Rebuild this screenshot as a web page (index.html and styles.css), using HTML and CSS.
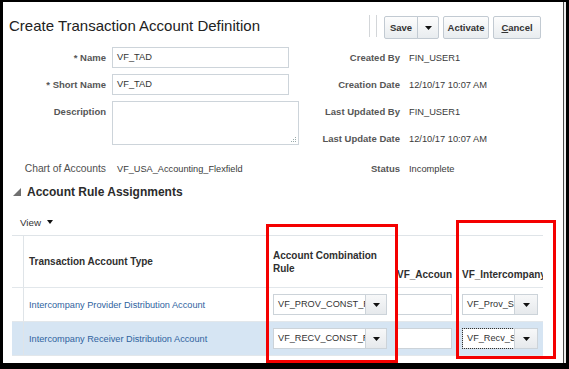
FILE: index.html
```html
<!DOCTYPE html>
<html>
<head>
<meta charset="utf-8">
<link rel="stylesheet" href="styles.css">
</head>
<body>
<div class="frame">
  <div class="page">
    <div class="header">
      <h1 class="title">Create Transaction Account Definition</h1>
      <div class="toolbar">
        <span class="sep"></span><span class="sep sep2"></span>
        <div class="split">
          <button class="btn save">Save</button>
          <button class="btn arrow"><svg width="7" height="4" viewBox="0 0 7 4"><path d="M0 0H7L3.5 4Z" fill="#111"/></svg></button>
        </div>
        <button class="btn activate">Activate</button>
        <button class="btn cancel"><u>C</u>ancel</button>
      </div>
    </div>

    <div class="form">
      <div class="lbl">* Name</div>
      <div><div class="input">VF_TAD</div></div>
      <div class="lbl2">Created By</div>
      <div class="val">FIN_USER1</div>

      <div class="lbl">* Short Name</div>
      <div><div class="input">VF_TAD</div></div>
      <div class="lbl2">Creation Date</div>
      <div class="val">12/10/17 10:07 AM</div>

      <div class="lbl">Description</div>
      <div class="desc"><svg width="5" height="5" viewBox="0 0 5 5"><rect x="4" y="0" width="1" height="1" fill="#9aa"/><rect x="2" y="2" width="1" height="1" fill="#9aa"/><rect x="4" y="2" width="1" height="1" fill="#9aa"/><rect x="0" y="4" width="1" height="1" fill="#9aa"/><rect x="2" y="4" width="1" height="1" fill="#9aa"/><rect x="4" y="4" width="1" height="1" fill="#9aa"/></svg></div>
      <div class="lbl2">Last Updated By</div>
      <div class="val">FIN_USER1</div>

      <div></div>
      <div class="lbl2">Last Update Date</div>
      <div class="val">12/10/17 10:07 AM</div>

      <div class="lbl plain r5">Chart of Accounts</div>
      <div class="val2 r5">VF_USA_Accounting_Flexfield</div>
      <div class="lbl2 r5">Status</div>
      <div class="val r5">Incomplete</div>
    </div>

    <div class="section">
      <svg width="8" height="8" viewBox="0 0 8 8"><path d="M8 0V8H0Z" fill="#707070"/></svg>
      <span class="section-title">Account Rule Assignments</span>
    </div>

    <div class="viewmenu">View <svg width="6" height="4" viewBox="0 0 6 4"><path d="M0 0H6L3 4Z" fill="#111"/></svg></div>

    <div class="table">
      <div class="trow thead">
        <div class="rh"></div>
        <div class="c c1 mid">Transaction Account Type</div>
        <div class="c mid wrap">Account Combination Rule</div>
        <div class="c bot">VF_Accoun</div>
        <div class="c bot">VF_Intercompany</div>
      </div>
      <div class="trow">
        <div class="rh"></div>
        <div class="c c1 link">Intercompany Provider Distribution Account</div>
        <div class="c"><div class="combo w2"><div class="txt">VF_PROV_CONST_RULE</div><div class="dd"><svg width="7" height="4" viewBox="0 0 7 4"><path d="M0 0H7L3.5 4Z" fill="#111"/></svg></div></div></div>
        <div class="c"><div class="plainin"></div></div>
        <div class="c"><div class="combo w4"><div class="txt">VF_Prov_Segment</div><div class="dd"><svg width="7" height="4" viewBox="0 0 7 4"><path d="M0 0H7L3.5 4Z" fill="#111"/></svg></div></div></div>
      </div>
      <div class="trow sel">
        <div class="rh"></div>
        <div class="c c1 link">Intercompany Receiver Distribution Account</div>
        <div class="c"><div class="combo w2"><div class="txt">VF_RECV_CONST_RULE</div><div class="dd"><svg width="7" height="4" viewBox="0 0 7 4"><path d="M0 0H7L3.5 4Z" fill="#111"/></svg></div></div></div>
        <div class="c"><div class="plainin"></div></div>
        <div class="c"><div class="combo w4"><div class="txt focus">VF_Recv_Segment</div><div class="dd"><svg width="7" height="4" viewBox="0 0 7 4"><path d="M0 0H7L3.5 4Z" fill="#111"/></svg></div></div></div>
      </div>
    </div>
  </div>
  <div class="mark mark1"></div>
  <div class="mark mark2"></div>
</div>
</body>
</html>
```

FILE: styles.css
```css
html, body {
  margin: 0;
  padding: 0;
  background: #000;
}
body {
  font-family: "Liberation Sans", Arial, sans-serif;
  color: #333;
}
.frame {
  position: relative;
  width: 569px;
  height: 369px;
  box-sizing: border-box;
  background: #000;
  padding: 2px 3px 6px 3px;
}
.page {
  height: 100%;
  box-sizing: border-box;
  background: #fff;
  box-shadow: inset -2px 0 0 #ececec, inset -3px 0 0 #4a4a4a;
  padding-left: 6px;
  overflow: hidden;
}

/* header */
.header {
  display: flex;
  justify-content: space-between;
  align-items: flex-start;
  padding-top: 14px;
  padding-right: 25px;
  height: 23px;
}
.title {
  margin: 1px 0 0 0;
  font-size: 15px;
  line-height: 18px;
  font-weight: normal;
  color: #222;
}
.toolbar {
  display: flex;
  align-items: flex-start;
}
.sep {
  width: 1px;
  height: 22px;
  margin-top: -1px;
  background: #d3d6d9;
}
.sep2 { margin-left: 6px; margin-right: 7px; }
.split { display: flex; }
.btn {
  height: 23px;
  box-sizing: border-box;
  border: 1px solid #c2cad2;
  border-radius: 2px;
  background: linear-gradient(#fdfdfd, #e8ecef);
  font-family: "Liberation Sans", Arial, sans-serif;
  font-size: 9.5px;
  font-weight: bold;
  color: #333;
  padding: 0;
  display: flex;
  align-items: center;
  justify-content: center;
}
.save { width: 34px; border-radius: 2px 0 0 2px; }
.arrow { width: 22px; margin-left: -1px; border-radius: 0 2px 2px 0; }
.activate { width: 46px; margin-left: 4px; }
.cancel { width: 48px; margin-left: 4px; }

/* form */
.form {
  margin: 8px 0 0 3px;
  display: grid;
  grid-template-columns: 100px 187px 101px 1fr;
  grid-auto-rows: 21px;
  row-gap: 6px;
  align-items: center;
}
.lbl {
  text-align: right;
  padding-right: 6px;
  font-size: 9.5px;
  font-weight: bold;
  color: #565656;
  white-space: nowrap;
}
.lbl.plain {
  font-weight: normal;
  font-size: 10.3px;
  color: #4f4f4f;
}
.lbl2 {
  text-align: right;
  font-size: 9.5px;
  font-weight: bold;
  color: #565656;
  white-space: nowrap;
}
.val {
  padding-left: 9px;
  font-size: 9.3px;
  color: #3a3a3a;
  white-space: nowrap;
}
.val2 {
  padding-left: 5px;
  font-size: 9.2px;
  color: #3a3a3a;
  white-space: nowrap;
}
.r5 { margin-top: 6px; }
.input {
  width: 177px;
  height: 21px;
  box-sizing: border-box;
  border: 1px solid #cdd4da;
  padding-left: 4px;
  font-size: 9.3px;
  line-height: 19px;
  color: #333;
}
.desc {
  grid-row: span 2;
  align-self: start;
  width: 187px;
  height: 44px;
  box-sizing: border-box;
  border: 1px solid #cdd4da;
  display: flex;
  align-items: flex-end;
  justify-content: flex-end;
  padding: 2px;
}

/* section */
.section {
  margin: 8px 0 0 4px;
  display: flex;
  align-items: center;
  height: 16px;
}
.section-title {
  margin-left: 6px;
  font-size: 12px;
  font-weight: bold;
  color: #2b2b2b;
}
.viewmenu {
  margin: 15px 0 0 11px;
  height: 14px;
  display: flex;
  align-items: center;
  font-size: 9.8px;
  color: #333;
}
.viewmenu svg { margin-left: 6px; }

/* table */
.table {
  margin: 6px 0 0 3px;
  width: 531px;
  border-top: 1px solid #dfe4e8;
}
.trow {
  display: grid;
  grid-template-columns: 12px 243px 124px 65px 87px;
  height: 33px;
  border-bottom: 1px solid #e2e7eb;
}
.trow.thead { height: 51px; }
.trow.sel { background: #d6e5f3; }
.rh {
  border-right: 1px solid #dfe4e8;
}
.c {
  display: flex;
  align-items: center;
  padding-left: 6px;
  overflow: hidden;
  white-space: nowrap;
}
.c1 { padding-left: 5px; }
.thead .c {
  font-size: 10px;
  font-weight: bold;
  color: #2f2f2f;
  line-height: 13px;
}
.thead .wrap { white-space: normal; padding-right: 6px; }
.thead .bot { align-items: flex-end; padding-bottom: 6px; }
.link {
  font-size: 9.2px;
  color: #2f63a0;
}
.combo {
  display: flex;
  height: 21px;
  flex: none;
}
.combo .txt {
  box-sizing: border-box;
  height: 21px;
  border: 1px solid #ccd3d9;
  background: #fff;
  padding-left: 4px;
  font-size: 9.2px;
  line-height: 19px;
  color: #333;
  overflow: hidden;
  white-space: nowrap;
}
.combo .txt.focus {
  outline: 1px dotted #333;
  outline-offset: -1px;
}
.w2 .txt { width: 93px; }
.w4 .txt { width: 53px; }
.combo .dd {
  box-sizing: border-box;
  width: 22px;
  height: 21px;
  margin-left: -1px;
  border: 1px solid #ccd3d9;
  background: linear-gradient(#f7f8f9, #e6e9ec);
  display: flex;
  align-items: center;
  justify-content: center;
}
.w4 .dd { width: 24px; }
.plainin {
  box-sizing: border-box;
  width: 55px;
  height: 21px;
  border: 1px solid #ccd3d9;
  background: #fff;
  flex: none;
}

/* annotation boxes */
.mark {
  position: absolute;
  box-sizing: border-box;
  border: 3px solid #f40000;
}
.mark1 { left: 266px; top: 224px; width: 132px; height: 139px; }
.mark2 { left: 456px; top: 220px; width: 100px; height: 139px; }
```
